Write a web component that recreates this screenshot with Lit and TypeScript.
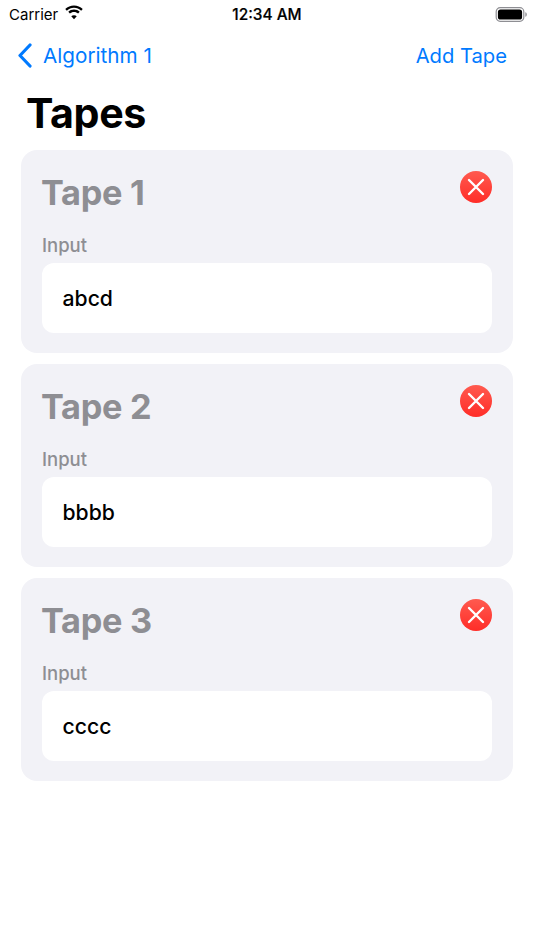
import { LitElement, html, css } from "lit";
import { customElement } from "lit/decorators.js";

@customElement("app-root")
export class AppRoot extends LitElement {
  static styles = css`
    :host { display: block; width: 534px; height: 950px; background: #fff; font-family: Inter, "Liberation Sans", sans-serif; overflow: hidden; }
    .status { height: 28px; display: grid; grid-template-columns: 1fr auto 1fr; align-items: center; padding: 0 6px 0 9px; color: #000; }
    .left { display: flex; align-items: center; gap: 6px; font-size: 15px; }
    .left svg { display: block; margin-top: -3px; }
    .time { font-size: 15.4px; font-weight: 500; -webkit-text-stroke: 0.2px #000; margin-left: -3px; }
    .right { display: flex; justify-content: flex-end; }
    .nav { height: 46px; margin-top: 4px; display: flex; justify-content: space-between; align-items: center; padding: 0 27px 0 17px; color: #007aff; }
    .back { display: flex; align-items: center; gap: 11px; font-size: 20.7px; }
    .back svg { display: block; }
    .add { font-size: 20.2px; }
    h1 { margin: 0; font-size: 41.2px; line-height: 50px; height: 50px; font-weight: 700; letter-spacing: -0.4px; padding: 10px 0 0 26px; color: #000; }
    .list { display: flex; flex-direction: column; gap: 11px; padding: 0 21px; margin-top: 12px; }
    .card { background: #f2f2f7; border-radius: 16px; height: 203px; box-sizing: border-box; padding: 20.5px 21px 20.5px; display: flex; flex-direction: column; }
    .head { display: flex; justify-content: space-between; align-items: flex-start; height: 61.5px; }
    .title { font-size: 34.3px; font-weight: 700; color: #8e8e93; line-height: 44px; letter-spacing: -0.3px; margin-left: -1px; }
    .x { display: block; }
    .label { font-size: 18.5px; font-weight: 500; color: #8e8e93; line-height: 26px; height: 31px; }
    .field { flex: 1; background: #fff; border-radius: 12px; display: flex; align-items: center; padding: 0 20.5px; font-size: 21.2px; font-weight: 500; color: #000; }
  `;

  private wifi() {
    return html`<svg width="20" height="15" viewBox="0 0 19 14"><path fill="#000" d="M9.500 2.600c2.600 0 5 1 6.800 2.700l1.500-1.600C15.600 1.600 12.700.3 9.500.3S3.400 1.600 1.200 3.700l1.500 1.600C4.500 3.600 6.900 2.600 9.500 2.600zM9.500 6.500c1.500 0 2.900.6 3.900 1.500l1.500-1.600C13.500 5 11.600 4.200 9.500 4.200S5.500 5 4.100 6.400L5.600 8c1-.9 2.400-1.500 3.900-1.500zM9.500 13.500l2.600-2.900c-.7-.6-1.600-1-2.600-1s-1.900.4-2.600 1z"/></svg>`;
  }

  private battery() {
    return html`<svg width="33" height="15" viewBox="0 0 32 15"><rect x=".7" y=".7" width="27.600" height="13.600" rx="4" fill="none" stroke="#8e8e93" stroke-width="1.200"/><rect x="2.400" y="2.400" width="24.200" height="10.200" rx="2.600" fill="#000"/><path d="M29.800 5.200c1 .3 1.500 1.200 1.500 2.300s-.5 2-1.500 2.300z" fill="#8e8e93"/></svg>`;
  }

  private closeIcon() {
    return html`<svg class="x" width="32" height="32" viewBox="0 0 32 32"><defs><linearGradient id="g" x1="0" y1="0" x2="0" y2="1"><stop offset="0" stop-color="#ff5a4f"/><stop offset="1" stop-color="#ff2d28"/></linearGradient></defs><circle cx="16" cy="16" r="16" fill="url(#g)"/><path d="M9 9 23 23M23 9 9 23" stroke="#fff" stroke-width="2.400" stroke-linecap="round"/></svg>`;
  }

  render() {
    const tapes = [["Tape 1", "abcd"], ["Tape 2", "bbbb"], ["Tape 3", "cccc"]];
    return html`
      <div class="status">
        <div class="left">Carrier ${this.wifi()}</div>
        <div class="time">12:34 AM</div>
        <div class="right">${this.battery()}</div>
      </div>
      <div class="nav">
        <div class="back">
          <svg width="15" height="25" viewBox="0 0 15 25"><path d="M13 2 3 12.500 13 23" fill="none" stroke="#007aff" stroke-width="3.200" stroke-linecap="round" stroke-linejoin="round"/></svg>
          <span>Algorithm 1</span>
        </div>
        <div class="add">Add Tape</div>
      </div>
      <h1>Tapes</h1>
      <div class="list">
        ${tapes.map(([t, v]) => html`
          <div class="card">
            <div class="head"><div class="title">${t}</div>${this.closeIcon()}</div>
            <div class="label">Input</div>
            <div class="field">${v}</div>
          </div>`)}
      </div>
    `;
  }
}
